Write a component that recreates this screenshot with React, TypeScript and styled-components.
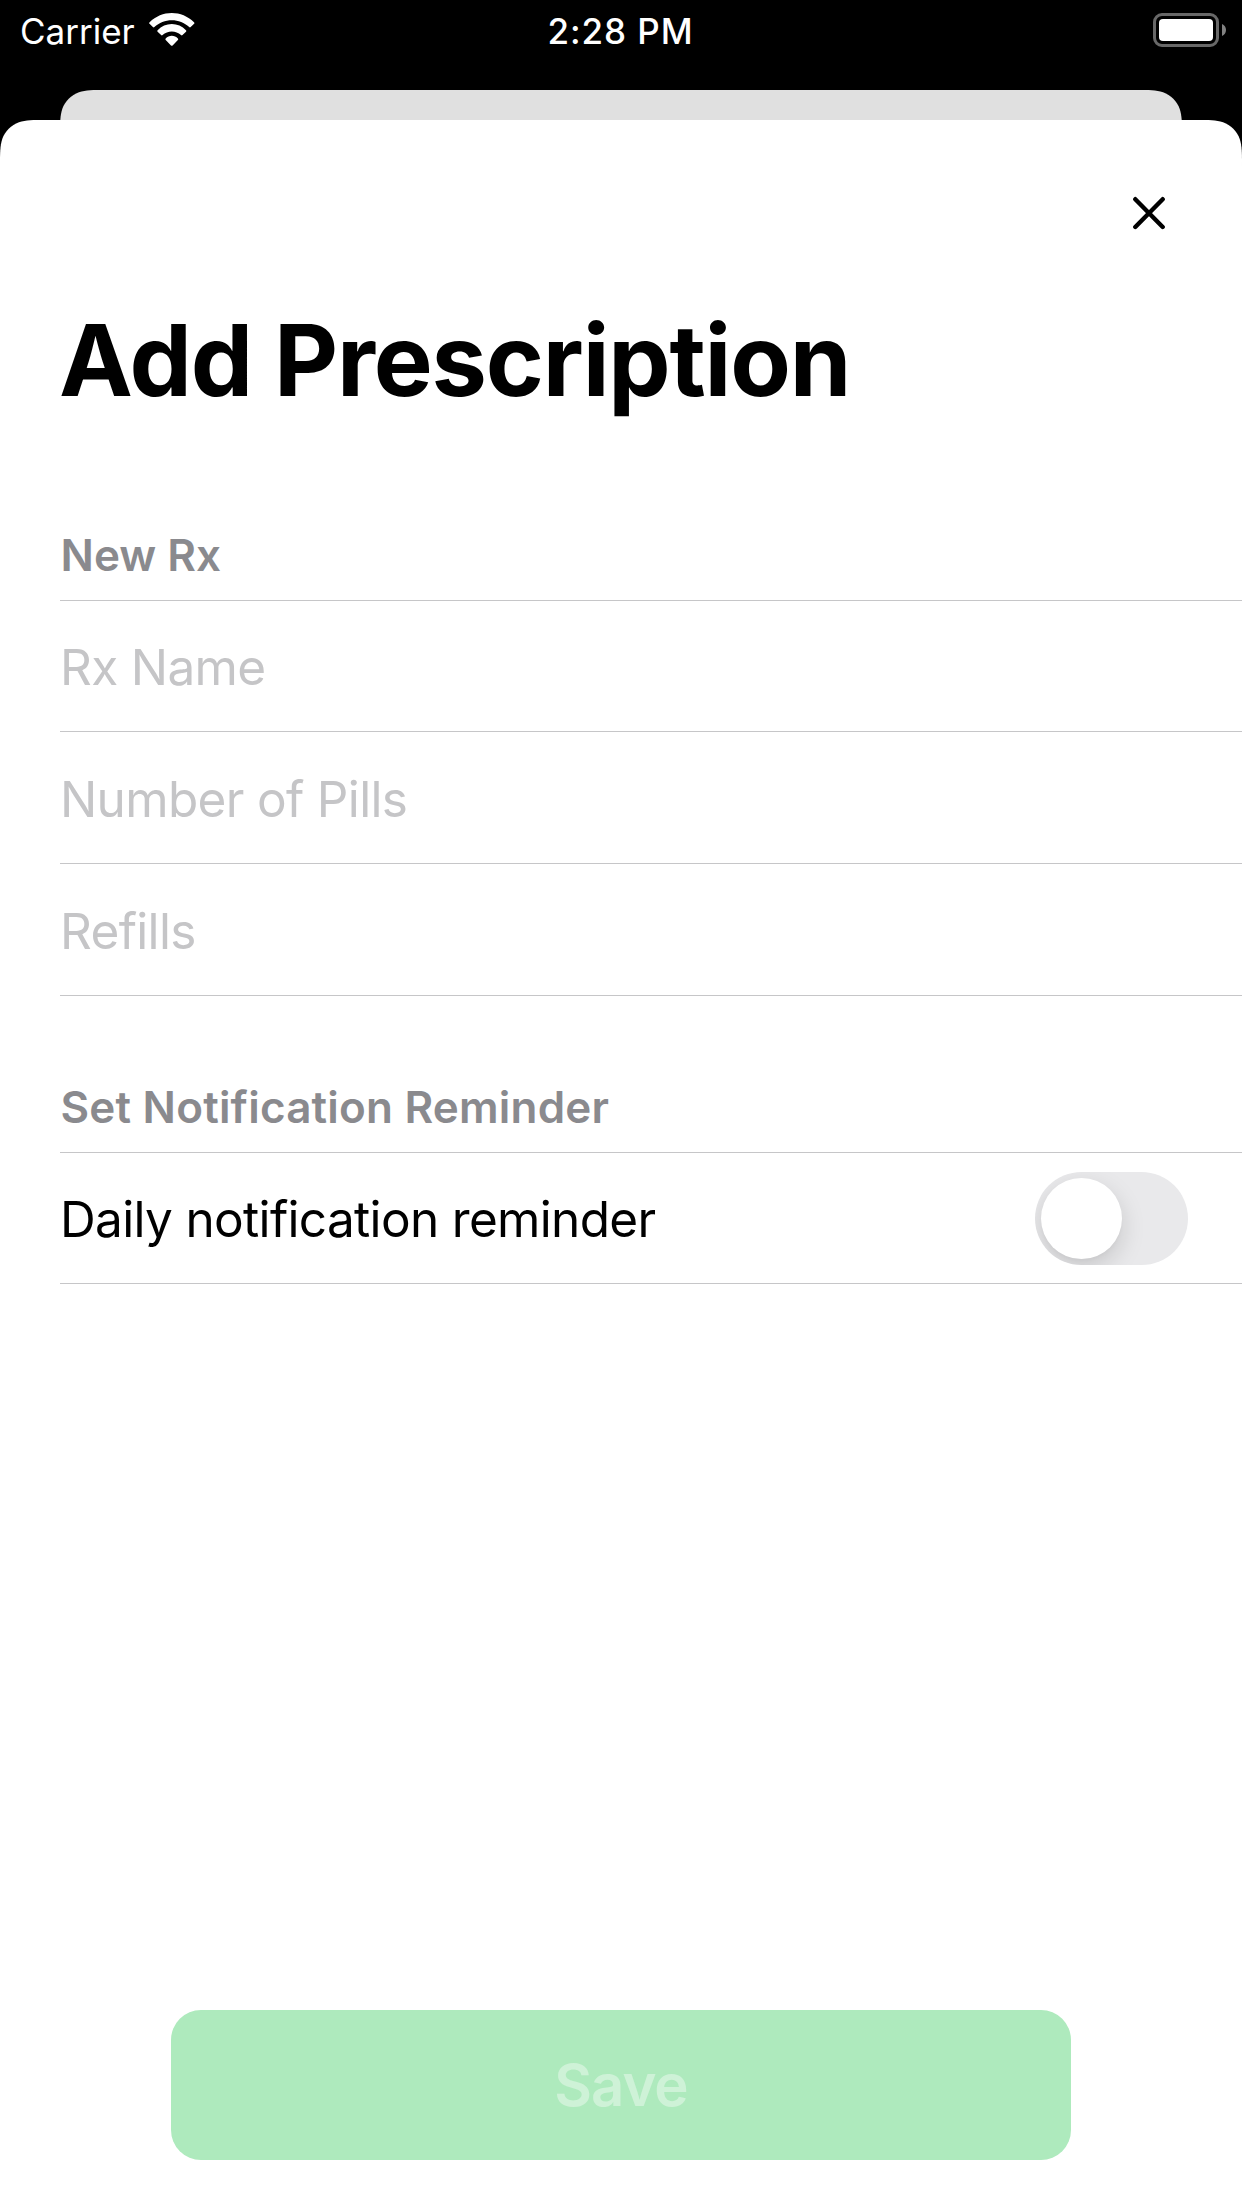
import React, { useState } from "react";
import styled, { createGlobalStyle } from "styled-components";

const GlobalStyle = createGlobalStyle`
  *, *::before, *::after { box-sizing: border-box; }
  body { margin: 0; background: #000; }
  button { border: 0; padding: 0; background: none; font: inherit; }
`;

const Screen = styled.div`
  display: flex;
  flex-direction: column;
  width: 1242px;
  height: 2208px;
  overflow: hidden;
  background: #000;
  color: #000;
  font-family: Inter, "Liberation Sans", sans-serif;
`;

const StatusBar = styled.header`
  display: grid;
  grid-template-columns: 1fr auto 1fr;
  align-items: start;
  flex: none;
  height: 90px;
  padding: 0 16px 0 20px;
  color: #fff;
  font-size: 35px;
  line-height: 62px;
`;

const Carrier = styled.div`
  display: flex;
  align-items: flex-start;
  gap: 14px;
`;

const WifiIcon = styled.svg`
  width: 46px;
  height: 34px;
  margin-top: 13px;
`;

const Clock = styled.time`
  margin-right: 5px;
  font-weight: 550;
  letter-spacing: 0.95px;
`;

const BatteryIcon = styled.svg`
  justify-self: end;
  width: 73px;
  height: 34px;
  margin-top: 13px;
`;

const BackCard = styled.div`
  flex: none;
  height: 30px;
  margin: 0 60px;
  background: #e0e0e0;
  clip-path: path("M0 46C0 32.65 0 26.05 2.25 18.94C5.07 11.18 11.18 5.07 18.94 2.25C26.05 0 32.65 0 45.86 0H1076.14C1089.35 0 1095.95 0 1103.06 2.25C1110.82 5.07 1116.93 11.18 1119.75 18.94C1122 26.05 1122 32.65 1122 46Z");
`;

const Sheet = styled.main`
  display: flex;
  flex-direction: column;
  flex: 1;
  padding-top: 48px;
  background: #fff;
  clip-path: path("M0 45.86C0 32.65 0 26.05 2.25 18.94C5.07 11.18 11.18 5.07 18.94 2.25C26.05 0 32.65 0 45.86 0H1196.14C1209.35 0 1215.95 0 1223.06 2.25C1230.82 5.07 1236.93 11.18 1239.75 18.94C1242 26.05 1242 32.65 1242 45.86V2088H0Z");
`;

const CloseButton = styled.button`
  display: grid;
  place-items: center;
  align-self: flex-end;
  width: 90px;
  height: 90px;
  margin-right: 48px;
  color: #000;
`;

const Title = styled.h1`
  margin: 42px 0 0 59px;
  font-size: 99px;
  font-weight: 700;
  line-height: 120px;
  letter-spacing: -1.2px;
`;

const Section = styled.section<{ $gap: number }>`
  margin-left: 60px;
  padding-top: ${(p) => p.$gap}px;
`;

const SectionTitle = styled.h2<{ $tracking?: number }>`
  margin: 0;
  padding: 0 0 15px 0.5px;
  border-bottom: 1px solid #c6c6c8;
  color: #8a8a8e;
  font-size: 44px;
  font-weight: 600;
  line-height: 60px;
  letter-spacing: ${(p) => p.$tracking ?? 0}px;
`;

const Row = styled.div<{ $height: number }>`
  display: flex;
  align-items: center;
  justify-content: space-between;
  height: ${(p) => p.$height}px;
  padding-right: 54px;
  border-bottom: 1px solid #c6c6c8;
`;

const RowText = styled.span<{ $placeholder?: boolean }>`
  padding-top: 2px;
  color: ${(p) => (p.$placeholder ? "#c5c5c7" : "#000")};
  font-size: 49.5px;
  line-height: 60px;
  letter-spacing: -0.67px;
`;

const Track = styled.button<{ $on: boolean }>`
  display: flex;
  align-items: center;
  justify-content: ${(p) => (p.$on ? "flex-end" : "flex-start")};
  width: 153px;
  height: 93px;
  padding: 0 6px;
  border-radius: 47px;
  overflow: hidden;
  background: ${(p) => (p.$on ? "#34c759" : "#e9e9eb")};
`;

const Thumb = styled.span`
  width: 81px;
  height: 81px;
  border-radius: 50%;
  background: #fff;
  box-shadow: 0 9px 24px rgba(0, 0, 0, 0.15), 0 3px 3px rgba(0, 0, 0, 0.02);
`;

const SaveButton = styled.button`
  align-self: center;
  width: 900px;
  height: 150px;
  margin: auto 0 48px;
  border-radius: 30px;
  background: #aeeabd;
  color: #cef2d7;
  font-size: 58px;
  font-weight: 600;
  line-height: 150px;
  letter-spacing: -1px;
`;

const fields = [
  { label: "Rx Name", height: 131 },
  { label: "Number of Pills", height: 132 },
  { label: "Refills", height: 132 },
];

export default function App() {
  const [daily, setDaily] = useState(false);

  return (
    <Screen>
      <GlobalStyle />
      <StatusBar>
        <Carrier>
          Carrier
          <WifiIcon viewBox="0 0 46 34" fill="#fff">
            <path d="M0.6 9.2C6.8 3.2 14.6 0 22.8 0C31 0 38.8 3.2 45 9.2C45.6 9.8 45.6 10.3 45.1 10.8L41.7 14.1C41.2 14.6 40.7 14.6 40.2 14.1C35.5 9.7 29.3 7.2 22.8 7.2C16.3 7.2 10.1 9.7 5.4 14.1C4.9 14.6 4.4 14.6 3.9 14.1L0.5 10.8C0 10.3 0 9.8 0.6 9.2Z" />
            <path d="M8.6 17.2C12.4 13.2 17.5 11 22.8 11C28.1 11 33.2 13.2 37 17.2C37.5 17.7 37.5 18.2 37 18.7L33.5 22.1C33 22.6 32.5 22.6 32 22.1C29.5 19.8 26.2 18.5 22.8 18.5C19.4 18.5 16.1 19.8 13.6 22.1C13.1 22.6 12.6 22.6 12.1 22.1L8.6 18.7C8.1 18.2 8.1 17.7 8.6 17.2Z" />
            <path d="M16.7 25.6C18.3 23.7 20.5 22.8 22.8 22.8C25.1 22.8 27.3 23.7 28.9 25.6C29.4 26.1 29.4 26.6 28.9 27.1L23.6 32.4C23.1 32.9 22.5 32.9 22 32.4L16.7 27.1C16.2 26.6 16.2 26.1 16.7 25.6Z" />
          </WifiIcon>
        </Carrier>
        <Clock>2:28 PM</Clock>
        <BatteryIcon viewBox="0 0 73 34">
          <rect x="1.5" y="1.5" width="63" height="31" rx="7.5" fill="none" stroke="#686868" strokeWidth="3" />
          <rect x="6" y="6" width="54" height="22" rx="4" fill="#fff" />
          <path d="M69 11C71.4 12 73 14.3 73 17C73 19.7 71.4 22 69 23Z" fill="#818181" />
        </BatteryIcon>
      </StatusBar>

      <BackCard />

      <Sheet>
        <CloseButton aria-label="Close">
          <svg width="34" height="34" viewBox="0 0 34 34" fill="none" stroke="currentColor" strokeWidth="4.4" strokeLinecap="round">
            <path d="M3.3 3.2L30.7 31M30.7 3.2L3.3 31" />
          </svg>
        </CloseButton>
        <Title>Add Prescription</Title>

        <Section $gap={105}>
          <SectionTitle>New Rx</SectionTitle>
          {fields.map((f) => (
            <Row key={f.label} $height={f.height}>
              <RowText $placeholder>{f.label}</RowText>
            </Row>
          ))}
        </Section>

        <Section $gap={81}>
          <SectionTitle $tracking={0.2}>Set Notification Reminder</SectionTitle>
          <Row $height={131}>
            <RowText>Daily notification reminder</RowText>
            <Track $on={daily} role="switch" aria-checked={daily} aria-label="Daily notification reminder" onClick={() => setDaily(!daily)}>
              <Thumb />
            </Track>
          </Row>
        </Section>

        <SaveButton disabled>Save</SaveButton>
      </Sheet>
    </Screen>
  );
}
